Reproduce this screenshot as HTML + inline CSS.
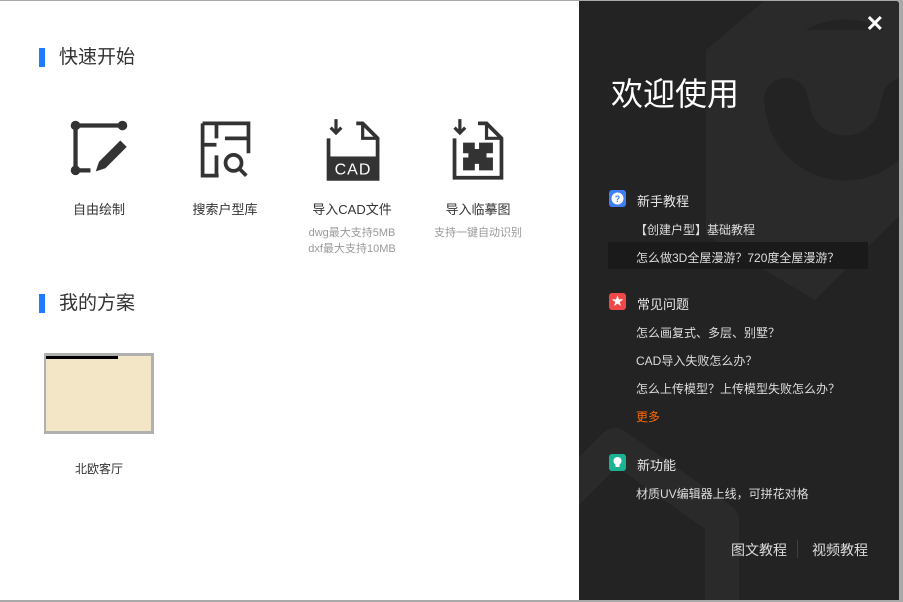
<!DOCTYPE html>
<html><head><meta charset="utf-8"><style>
*{margin:0;padding:0;box-sizing:border-box}
body{width:903px;height:602px;background:#a9a9a9;font-family:"Liberation Sans","Noto Sans CJK SC",sans-serif;position:relative;overflow:hidden}
.left{position:absolute;left:0;top:1px;width:579px;height:599px;background:#fff}
.right{position:absolute;left:579px;top:1px;width:320px;height:599px;background:#232323;overflow:hidden;border-top-right-radius:3px}
.h{position:absolute;left:39px;font-size:19px;color:#333;line-height:22px}
.h:before{content:"";position:absolute;left:0;top:1px;width:6px;height:19px;background:#1f7cff}
.h span{margin-left:20px}
.it{position:absolute;top:116px;width:120px;text-align:center}
.it svg{display:block;margin:0 auto}
.it .t{font-size:13px;color:#333;margin-top:18px}
.it .s{font-size:11px;color:#999;line-height:16px;margin-top:7px}
.r{position:absolute;color:#ddd;font-size:12px}
.sec{position:absolute;left:30px;font-size:13px;color:#e6e6e6}
.ic{position:absolute;left:0;top:-1px;width:17px;height:17px;border-radius:3px}
.sec span{margin-left:28px}
</style></head><body>
<div class="left">
<div class="h" style="top:46px"><span>快速开始</span></div>
<div class="it" style="left:39px">
<svg width="64" height="64" viewBox="0 0 60 60"><path d="M8 8H52M8 8V50M8 50H22" stroke="#333" stroke-width="4" fill="none"/><circle cx="8" cy="8" r="4.5" fill="#333"/><circle cx="52" cy="8" r="4.5" fill="#333"/><circle cx="8" cy="50" r="4.5" fill="#333"/><path d="M50 22l6 6-20 20-9 3 3-9z" fill="#333"/></svg>
<div class="t">自由绘制</div></div>
<div class="it" style="left:165px">
<svg width="64" height="64" viewBox="0 0 60 60"><path d="M9 6H52V34M9 6V55H24M22 6V20M9 26H22M22 36V55M30 20H52" stroke="#333" stroke-width="3.5" fill="none"/><circle cx="38" cy="43" r="7.5" stroke="#333" stroke-width="3.5" fill="none"/><path d="M43 48l7 7" stroke="#333" stroke-width="3.5"/></svg>
<div class="t">搜索户型库</div></div>
<div class="it" style="left:292px">
<svg width="64" height="64" viewBox="0 0 60 60"><path d="M34 6H40l14 14V58H8V20" stroke="#333" stroke-width="3.5" fill="none"/><path d="M40 6V20H54" stroke="#333" stroke-width="3" fill="none"/><path d="M15 2V14M10 10l5 5 5-5" stroke="#333" stroke-width="3" fill="none"/><rect x="8" y="37" width="46" height="21" fill="#333"/><text x="31" y="54" font-size="15" fill="#fff" text-anchor="middle" font-family="Liberation Sans" letter-spacing="1">CAD</text></svg>
<div class="t">导入CAD文件</div><div class="s">dwg最大支持5MB<br>dxf最大支持10MB</div></div>
<div class="it" style="left:418px">
<svg width="64" height="64" viewBox="0 0 60 60"><path d="M30 6H38l14 14V57H8V20" stroke="#333" stroke-width="3.5" fill="none"/><path d="M38 6V20H52" stroke="#333" stroke-width="3" fill="none"/><path d="M13 2V14M8 10l5 5 5-5" stroke="#333" stroke-width="3" fill="none"/><path d="M16 24H27V30H31V24H44V34H38V38H44V50H31V44H27V50H16V38H21V34H16Z" fill="#333"/></svg>
<div class="t">导入临摹图</div><div class="s">支持一键自动识别</div></div>
<div class="h" style="top:292px"><span>我的方案</span></div>
<div style="position:absolute;left:44px;top:352px;width:110px;height:81px;background:#f2e6c6;border:3px solid #b0b0b0;border-left-width:2px"><div style="position:absolute;left:0;top:0;width:72px;height:3px;background:#000"></div></div>
<div style="position:absolute;left:44px;top:459px;width:110px;text-align:center;font-size:12px;color:#333">北欧客厅</div>
</div>
<div class="right">
<svg style="position:absolute;left:0;top:0" width="320" height="600" viewBox="579 1 320 600"><path d="M706 50L765 0H900V215L815 300L706 235Z" fill="#2a2a2a"/><circle cx="845" cy="100" r="58" stroke="#232323" stroke-width="45" fill="none"/><rect x="760" y="30" width="140" height="70" fill="#2a2a2a"/><circle cx="786" cy="100" r="22" fill="#232323"/><circle cx="904" cy="100" r="22" fill="#232323"/><path d="M560 500L615 445L722 520V610" stroke="#2a2a2a" stroke-width="34" fill="none" stroke-linejoin="round"/></svg>
<div style="position:absolute;left:32px;top:68px;font-size:32px;color:#fff">欢迎使用</div>
<div style="position:absolute;right:15px;top:10px;font-size:22px;color:#fff;font-weight:bold">✕</div>
<div class="sec" style="top:190px"><div class="ic" style="background:#3d7ef5"><svg width="17" height="17"><circle cx="8.5" cy="8.5" r="6" fill="#fff"/><text x="8.5" y="12" font-size="9" text-anchor="middle" fill="#3d7ef5" font-weight="bold">?</text></svg></div><span>新手教程</span></div>
<div class="r" style="left:56px;top:220px">【创建户型】基础教程</div>
<div style="position:absolute;left:29px;top:241px;width:260px;height:27px;background:#1a1a1a"></div>
<div class="r" style="left:57px;top:248px">怎么做3D全屋漫游？720度全屋漫游？</div>
<div class="sec" style="top:293px"><div class="ic" style="background:#f04848;color:#fff;font-size:12px;text-align:center;line-height:17px">★</div><span>常见问题</span></div>
<div class="r" style="left:57px;top:323px">怎么画复式、多层、别墅？</div>
<div class="r" style="left:57px;top:351px">CAD导入失败怎么办？</div>
<div class="r" style="left:57px;top:379px">怎么上传模型？上传模型失败怎么办？</div>
<div class="r" style="left:57px;top:407px;color:#ff6a00">更多</div>
<div class="sec" style="top:454px"><div class="ic" style="background:#1ab394"><svg width="17" height="17"><circle cx="8.5" cy="7" r="4" fill="#fff"/><rect x="6.5" y="10" width="4" height="3" fill="#fff"/></svg></div><span>新功能</span></div>
<div class="r" style="left:57px;top:484px">材质UV编辑器上线，可拼花对格</div>
<div class="r" style="left:152px;top:539px;font-size:14px">图文教程</div>
<div style="position:absolute;left:218px;top:539px;width:1px;height:18px;background:#3a3f4a"></div>
<div class="r" style="left:233px;top:539px;font-size:14px">视频教程</div>
</div>
</body></html>
